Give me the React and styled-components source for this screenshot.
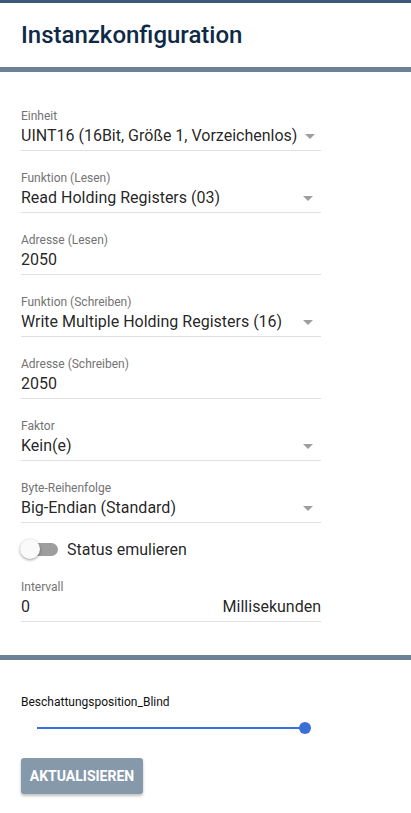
import React from 'react'
import styled, { createGlobalStyle } from 'styled-components'

const GlobalStyle = createGlobalStyle`
  html, body {
    margin: 0;
    padding: 0;
    background: #fff;
    font-family: Roboto, "Liberation Sans", Arial, sans-serif;
  }
`;

const fields = [
  { label: 'Einheit', value: 'UINT16 (16Bit, Größe 1, Vorzeichenlos)', select: true },
  { label: 'Funktion (Lesen)', value: 'Read Holding Registers (03)', select: true },
  { label: 'Adresse (Lesen)', value: '2050' },
  { label: 'Funktion (Schreiben)', value: 'Write Multiple Holding Registers (16)', select: true },
  { label: 'Adresse (Schreiben)', value: '2050' },
  { label: 'Faktor', value: 'Kein(e)', select: true },
  { label: 'Byte-Reihenfolge', value: 'Big-Endian (Standard)', select: true },
];

const App = () => {
  return (
    <Page>
      <GlobalStyle />
      <Header>
        <Title>Instanzkonfiguration</Title>
      </Header>
      <Form>
        {fields.map((f) => (
          <Field key={f.label}>
            <Label>{f.label}</Label>
            <Value>
              <span>{f.value}</span>
              {f.select && <Caret />}
            </Value>
          </Field>
        ))}
        <SwitchRow>
          <Track>
            <Thumb />
          </Track>
          <SwitchText>Status emulieren</SwitchText>
        </SwitchRow>
        <Field>
          <Label>Intervall</Label>
          <Value>
            <span>0</span>
            <Unit>Millisekunden</Unit>
          </Value>
        </Field>
      </Form>
      <Control>
        <SliderLabel>Beschattungsposition_Blind</SliderLabel>
        <Slider>
          <SliderTrack />
          <SliderKnob />
        </Slider>
        <Button>Aktualisieren</Button>
      </Control>
    </Page>
  )
};

export default App;

const Page = styled.div`
width: 411px;
min-height: 813px;
border-top: 3px solid #3c5a78;
box-sizing: border-box;
`;
const Header = styled.div`
height: 64px;
border-bottom: 5px solid #6b8196;
display: flex;
align-items: center;
padding: 0 21px;
`;
const Title = styled.div`
color: #0e2a47;
font-size: 24px;
font-weight: 500;
`;
const Form = styled.div`
padding: 37px 90px 33px 21px;
display: flex;
flex-direction: column;
border-bottom: 5px solid #6b8196;
`;
const Field = styled.div`
width: 300px;
margin-bottom: 20px;
&:last-child {
  margin-bottom: 0;
}
`;
const Label = styled.div`
font-size: 12px;
line-height: 14px;
color: #737373;
`;
const Value = styled.div`
margin-top: 3px;
font-size: 16px;
line-height: 20px;
color: rgba(0,0,0,0.87);
padding-bottom: 4px;
border-bottom: 1px solid #e0e0e0;
display: flex;
align-items: center;
justify-content: space-between;
white-space: nowrap;
`;
const Caret = styled.div`
width: 0;
height: 0;
border-left: 5px solid transparent;
border-right: 5px solid transparent;
border-top: 5px solid #9e9e9e;
margin-right: 8px;
margin-left: 8px;
`;
const Unit = styled.span`
color: rgba(0,0,0,0.87);
`;
const SwitchRow = styled.div`
display: flex;
align-items: center;
height: 28px;
margin: -8px 0 17px 0;
`;
const Track = styled.div`
position: relative;
width: 36px;
height: 13px;
border-radius: 7px;
background: #9e9e9e;
margin-left: 1px;
`;
const Thumb = styled.div`
position: absolute;
left: -2px;
top: -4px;
width: 20px;
height: 20px;
border-radius: 50%;
background: #fafafa;
box-shadow: 0 1px 3px rgba(0,0,0,0.4);
`;
const SwitchText = styled.span`
margin-left: 9px;
font-size: 16px;
color: rgba(0,0,0,0.87);
`;
const Control = styled.div`
padding: 35px 21px 0 21px;
`;
const SliderLabel = styled.div`
font-size: 12px;
line-height: 14px;
color: #111;
`;
const Slider = styled.div`
position: relative;
height: 14px;
margin: 12px 0 0 16px;
width: 274px;
display: flex;
align-items: center;
`;
const SliderTrack = styled.div`
width: 268px;
height: 2px;
background: #3a6fd8;
`;
const SliderKnob = styled.div`
position: absolute;
right: 0;
top: 1px;
width: 12px;
height: 12px;
border-radius: 50%;
background: #3a6fd8;
`;
const Button = styled.div`
margin-top: 23px;
width: 122px;
height: 36px;
display: flex;
align-items: center;
justify-content: center;
background: #8699ab;
color: #fff;
font-size: 14px;
font-weight: 700;
text-transform: uppercase;
border-radius: 3px;
box-shadow: 0 2px 3px rgba(0,0,0,0.25);
`;
